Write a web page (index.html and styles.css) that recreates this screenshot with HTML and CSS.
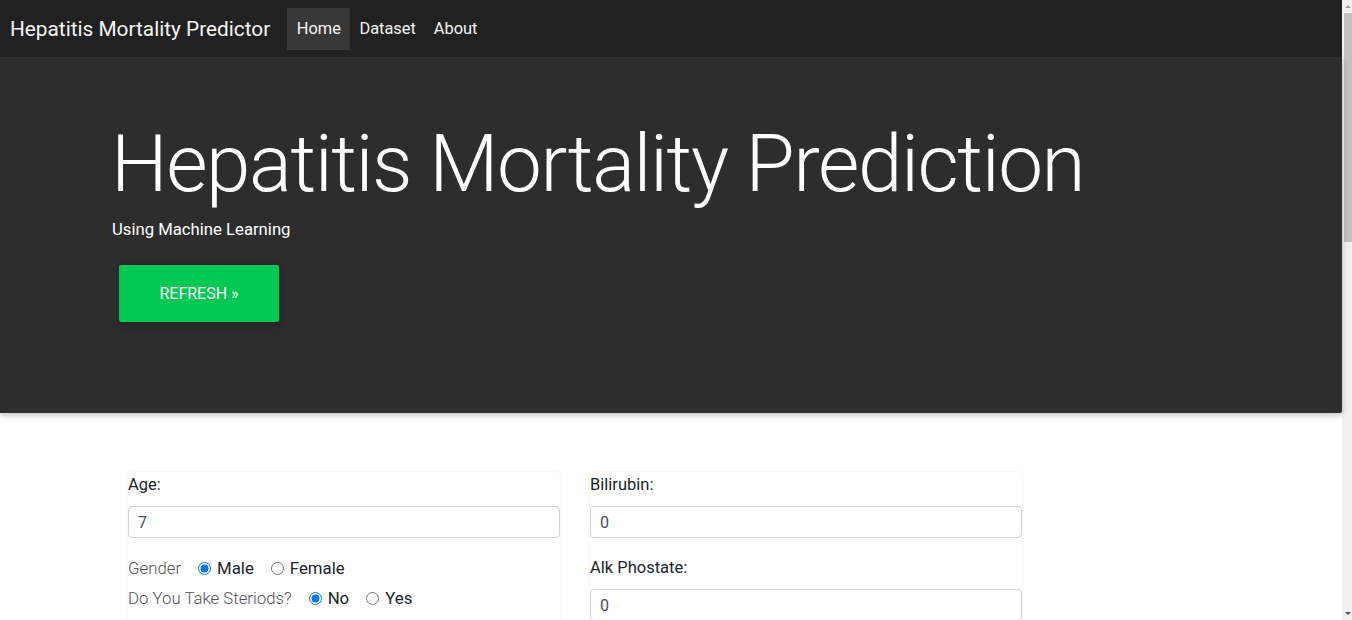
FILE: index.html
```html
<!DOCTYPE html>
<html lang="en">
<head>
<meta charset="utf-8">
<title>Hepatitis Mortality Predictor</title>
<link rel="stylesheet" href="styles.css">
</head>
<body>
<div class="page">
  <div class="main">
    <nav class="navbar">
      <span class="brand">Hepatitis Mortality Predictor</span>
      <ul class="nav">
        <li><a class="nav-link active" href="#">Home</a></li>
        <li><a class="nav-link" href="#">Dataset</a></li>
        <li><a class="nav-link" href="#">About</a></li>
      </ul>
    </nav>
    <header class="hero">
      <h1 class="hero-title">Hepatitis Mortality Prediction</h1>
      <p class="hero-sub">Using Machine Learning</p>
      <a class="btn-refresh" href="#">REFRESH »</a>
    </header>
    <section class="form-area">
      <div class="form-col">
        <div class="group">
          <label class="field-label">Age:</label>
          <input class="field" type="text" value="7">
        </div>
        <div class="radio-row">
          <span class="q">Gender</span>
          <label class="opt"><input type="radio" name="sex" checked><span>Male</span></label>
          <label class="opt"><input type="radio" name="sex"><span>Female</span></label>
        </div>
        <div class="radio-row">
          <span class="q">Do You Take Steriods?</span>
          <label class="opt"><input type="radio" name="ster" checked><span>No</span></label>
          <label class="opt"><input type="radio" name="ster"><span>Yes</span></label>
        </div>
      </div>
      <div class="form-col">
        <div class="group">
          <label class="field-label">Bilirubin:</label>
          <input class="field" type="text" value="0">
        </div>
        <div class="group">
          <label class="field-label">Alk Phostate:</label>
          <input class="field" type="text" value="0">
        </div>
      </div>
    </section>
  </div>
  <div class="scrollbar">
    <span class="arrow up"></span>
    <span class="thumb"></span>
    <span class="arrow down"></span>
  </div>
</div>
</body>
</html>
```
FILE: styles.css
```css
* { box-sizing: border-box; }
html, body { margin: 0; padding: 0; height: 620px; overflow: hidden; }
body { font-family: Roboto, "Liberation Sans", sans-serif; color: #212529; background: #fff; }

.page { display: flex; height: 620px; overflow: hidden; }
.main { width: 1342px; flex: none; }

.navbar {
  height: 57px;
  background: #212121;
  display: flex;
  align-items: center;
  padding: 0 10px;
  position: relative;
  z-index: 2;
}
.brand { color: #f5f5f5; font-size: 20.8px; line-height: 30px; margin-right: 17px; }
.nav { list-style: none; margin: 0; padding: 0; display: flex; }
.nav-link {
  display: block;
  color: #f5f5f5;
  text-decoration: none;
  font-size: 16.4px;
  line-height: 42px;
  padding: 0 9px;
}
.nav-link.active { background: #383838; padding: 0 9.5px; }

.hero {
  height: 356px;
  background: #2d2d2d;
  padding: 59px 0 0 111px;
  border-bottom-right-radius: 2px;
  box-shadow: 0 2px 5px 0 rgba(0,0,0,0.16), 0 2px 10px 0 rgba(0,0,0,0.12);
  position: relative;
  z-index: 1;
}
.hero-title {
  margin: 0;
  font-size: 80px;
  font-weight: 300;
  letter-spacing: -1.45px;
  line-height: 96px;
  color: #fff;
}
.hero-sub { margin: 6px 0 0 1px; color: #fff; font-size: 16.7px; line-height: 24px; }
.btn-refresh {
  display: inline-block;
  margin: 23px 0 0 8px;
  width: 160px;
  height: 57px;
  line-height: 57px;
  text-align: center;
  background: #00c853;
  color: #fff;
  font-size: 16px;
  text-decoration: none;
  border-radius: 2px;
  box-shadow: 0 2px 5px 0 rgba(0,0,0,0.16), 0 2px 10px 0 rgba(0,0,0,0.12);
}

.form-area {
  display: flex;
  gap: 30px;
  padding: 59px 0 0 128px;
}
.form-col {
  width: 432px;
  border-radius: 4px;
  box-shadow: 0 0 3px rgba(0,0,0,0.06);
  padding-top: 1px;
  height: 200px;
}
.group { margin-bottom: 18px; }
.field-label { display: block; font-size: 16.5px; line-height: 24px; margin-bottom: 9px; color: #212529; }
.field {
  display: block;
  width: 100%;
  height: 32px;
  border: 1px solid #ced4da;
  border-radius: 4px;
  padding: 0 9px;
  font-family: Roboto, "Liberation Sans", sans-serif;
  font-size: 16px;
  color: #495057;
  background: #fff;
}
.radio-row { display: flex; align-items: center; height: 30px; font-size: 16.8px; }
.group + .radio-row { margin-top: -3px; }
.q { color: #555; font-weight: 300; margin-right: 17px; }
.opt { display: inline-flex; align-items: center; margin-right: 17px; color: #212529; }
.opt input { margin: 0 6px 0 0; width: 13px; height: 13px; }

.scrollbar {
  width: 10px;
  flex: none;
  background: #f1f1f1;
  display: flex;
  flex-direction: column;
  align-items: flex-end;
}
.thumb { display: block; width: 8px; height: 229px; background: #c1c1c1; margin-top: 5px; }
.arrow { display: block; width: 0; height: 0; border-left: 3px solid transparent; border-right: 3px solid transparent; margin-right: 1px; }
.arrow.up { border-bottom: 3px solid #a3a3a3; margin-top: 5px; }
.arrow.down { border-top: 3px solid #505050; margin-top: auto; margin-bottom: 5px; }
```
